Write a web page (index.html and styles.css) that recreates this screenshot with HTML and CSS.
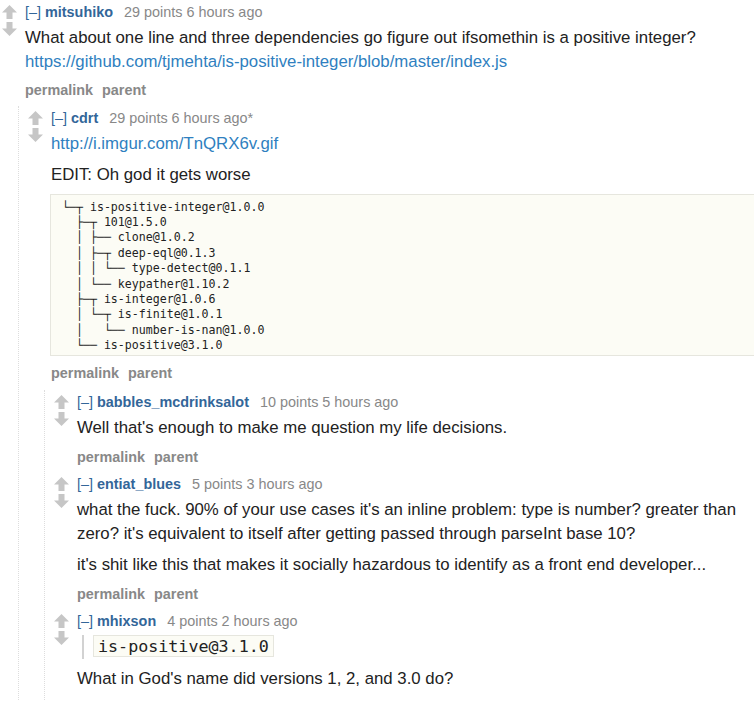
FILE: index.html
```html
<!DOCTYPE html>
<html>
<head>
<meta charset="utf-8">
<link rel="stylesheet" href="styles.css">
</head>
<body>
<div class="page">
  <div class="comment">
    <div class="midcol">
      <svg class="arrow" viewBox="0 0 15 14"><path d="M7.5 0 L15 7.5 L10.5 7.5 L10.5 14 L4.5 14 L4.5 7.5 L0 7.5 Z"/></svg>
      <svg class="arrow" viewBox="0 0 15 14"><path d="M7.5 14 L15 6.5 L10.5 6.5 L10.5 0 L4.5 0 L4.5 6.5 L0 6.5 Z"/></svg>
    </div>
    <div class="entry">
      <p class="tagline"><span class="expand">[–]</span> <span class="author">mitsuhiko</span> <span>29 points</span> <span>6 hours ago</span></p>
      <div class="md">
        <p>What about one line and three dependencies go figure out ifsomethin is a positive integer? <a href="#">https://github.com/tjmehta/is-positive-integer/blob/master/index.js</a></p>
      </div>
      <ul class="buttons"><li>permalink</li><li>parent</li></ul>

      <div class="child">
        <div class="comment">
          <div class="midcol">
            <svg class="arrow" viewBox="0 0 15 14"><path d="M7.5 0 L15 7.5 L10.5 7.5 L10.5 14 L4.5 14 L4.5 7.5 L0 7.5 Z"/></svg>
            <svg class="arrow" viewBox="0 0 15 14"><path d="M7.5 14 L15 6.5 L10.5 6.5 L10.5 0 L4.5 0 L4.5 6.5 L0 6.5 Z"/></svg>
          </div>
          <div class="entry">
            <p class="tagline"><span class="expand">[–]</span> <span class="author">cdrt</span> <span>29 points</span> <span>6 hours ago*</span></p>
            <div class="md">
              <p><a href="#">http://i.imgur.com/TnQRX6v.gif</a></p>
              <p>EDIT: Oh god it gets worse</p>
<pre>└─┬ is-positive-integer@1.0.0
  ├─┬ 101@1.5.0
  │ ├── clone@1.0.2
  │ ├─┬ deep-eql@0.1.3
  │ │ └── type-detect@0.1.1
  │ └── keypather@1.10.2
  ├─┬ is-integer@1.0.6
  │ └─┬ is-finite@1.0.1
  │   └── number-is-nan@1.0.0
  └── is-positive@3.1.0</pre>
            </div>
            <ul class="buttons"><li>permalink</li><li>parent</li></ul>

            <div class="child">
              <div class="comment">
                <div class="midcol">
                  <svg class="arrow" viewBox="0 0 15 14"><path d="M7.5 0 L15 7.5 L10.5 7.5 L10.5 14 L4.5 14 L4.5 7.5 L0 7.5 Z"/></svg>
                  <svg class="arrow" viewBox="0 0 15 14"><path d="M7.5 14 L15 6.5 L10.5 6.5 L10.5 0 L4.5 0 L4.5 6.5 L0 6.5 Z"/></svg>
                </div>
                <div class="entry">
                  <p class="tagline"><span class="expand">[–]</span> <span class="author">babbles_mcdrinksalot</span> <span>10 points</span> <span>5 hours ago</span></p>
                  <div class="md">
                    <p>Well that's enough to make me question my life decisions.</p>
                  </div>
                  <ul class="buttons"><li>permalink</li><li>parent</li></ul>
                </div>
              </div>

              <div class="comment">
                <div class="midcol">
                  <svg class="arrow" viewBox="0 0 15 14"><path d="M7.5 0 L15 7.5 L10.5 7.5 L10.5 14 L4.5 14 L4.5 7.5 L0 7.5 Z"/></svg>
                  <svg class="arrow" viewBox="0 0 15 14"><path d="M7.5 14 L15 6.5 L10.5 6.5 L10.5 0 L4.5 0 L4.5 6.5 L0 6.5 Z"/></svg>
                </div>
                <div class="entry">
                  <p class="tagline"><span class="expand">[–]</span> <span class="author">entiat_blues</span> <span>5 points</span> <span>3 hours ago</span></p>
                  <div class="md">
                    <p>what the fuck. 90% of your use cases it's an inline problem: type is number? greater than zero? it's equivalent to itself after getting passed through parseInt base 10?</p>
                    <p>it's shit like this that makes it socially hazardous to identify as a front end developer...</p>
                  </div>
                  <ul class="buttons"><li>permalink</li><li>parent</li></ul>
                </div>
              </div>

              <div class="comment">
                <div class="midcol">
                  <svg class="arrow" viewBox="0 0 15 14"><path d="M7.5 0 L15 7.5 L10.5 7.5 L10.5 14 L4.5 14 L4.5 7.5 L0 7.5 Z"/></svg>
                  <svg class="arrow" viewBox="0 0 15 14"><path d="M7.5 14 L15 6.5 L10.5 6.5 L10.5 0 L4.5 0 L4.5 6.5 L0 6.5 Z"/></svg>
                </div>
                <div class="entry">
                  <p class="tagline"><span class="expand">[–]</span> <span class="author">mhixson</span> <span>4 points</span> <span>2 hours ago</span></p>
                  <div class="md">
                    <blockquote><p><code>is-positive@3.1.0</code></p></blockquote>
                    <p>What in God's name did versions 1, 2, and 3.0 do?</p>
                  </div>
                  <ul class="buttons"><li>permalink</li><li>parent</li></ul>
                </div>
              </div>
            </div>
          </div>
        </div>
      </div>
    </div>
  </div>
</div>
</body>
</html>
```

FILE: styles.css
```css
html, body {
  margin: 0;
  padding: 0;
  overflow: hidden;
  background: #fff;
}
body {
  width: 754px;
  height: 701px;
  font-family: "Liberation Sans", Arial, sans-serif;
  color: #222;
}
.page {
  width: 780px;
}
.comment {
  display: flex;
  padding-top: 3px;
}
.comment + .comment {
  margin-top: 6.5px;
}
.midcol {
  flex: 0 0 25px;
  box-sizing: border-box;
  padding: 2px 0 0 2px;
  display: flex;
  flex-direction: column;
  gap: 3px;
}
.arrow {
  display: block;
  width: 15px;
  height: 14px;
  fill: #c6c6c6;
}
.entry {
  flex: 1;
  min-width: 0;
}
.tagline {
  margin: 0;
  font-size: 14.4px;
  line-height: 18px;
  color: #888;
}
.expand {
  color: #369;
}
.author {
  color: #369;
  font-weight: bold;
  margin-right: 7px;
}
.md {
  margin-top: 5px;
  font-size: 16.8px;
  line-height: 23.5px;
}
.md p {
  margin: 8px 0 0;
}
.md > :first-child {
  margin-top: 0;
}
.md a {
  color: #2f7fc0;
  text-decoration: none;
}
.md pre {
  margin: 7px 0 0 -1px;
  padding: 5px 11px 1px;
  background: #fcfcf5;
  border: 1px solid #e6e6de;
  font-family: "DejaVu Sans Mono", monospace;
  font-size: 11.6px;
  line-height: 15.4px;
  color: #222;
}
.md blockquote {
  margin: 0 0 0 5px;
  padding-left: 9px;
  border-left: 2px solid #d2d2d2;
}
.md blockquote p {
  margin: 0;
}
.md code {
  font-family: "DejaVu Sans Mono", monospace;
  font-size: 16.7px;
  padding: 0 4px;
  background: #fcfcf5;
  border: 1px solid #e6e6de;
}
.buttons {
  list-style: none;
  margin: 8px 0 0;
  padding: 0;
  display: flex;
  gap: 9px;
  font-size: 14.4px;
  line-height: 18px;
  font-weight: bold;
  color: #888;
}
.child {
  margin: 6.5px 0 0 -7px;
  border-left: 1px dotted #ddd;
  padding-left: 7px;
}
.child .child {
  margin-top: 8.5px;
}
```
